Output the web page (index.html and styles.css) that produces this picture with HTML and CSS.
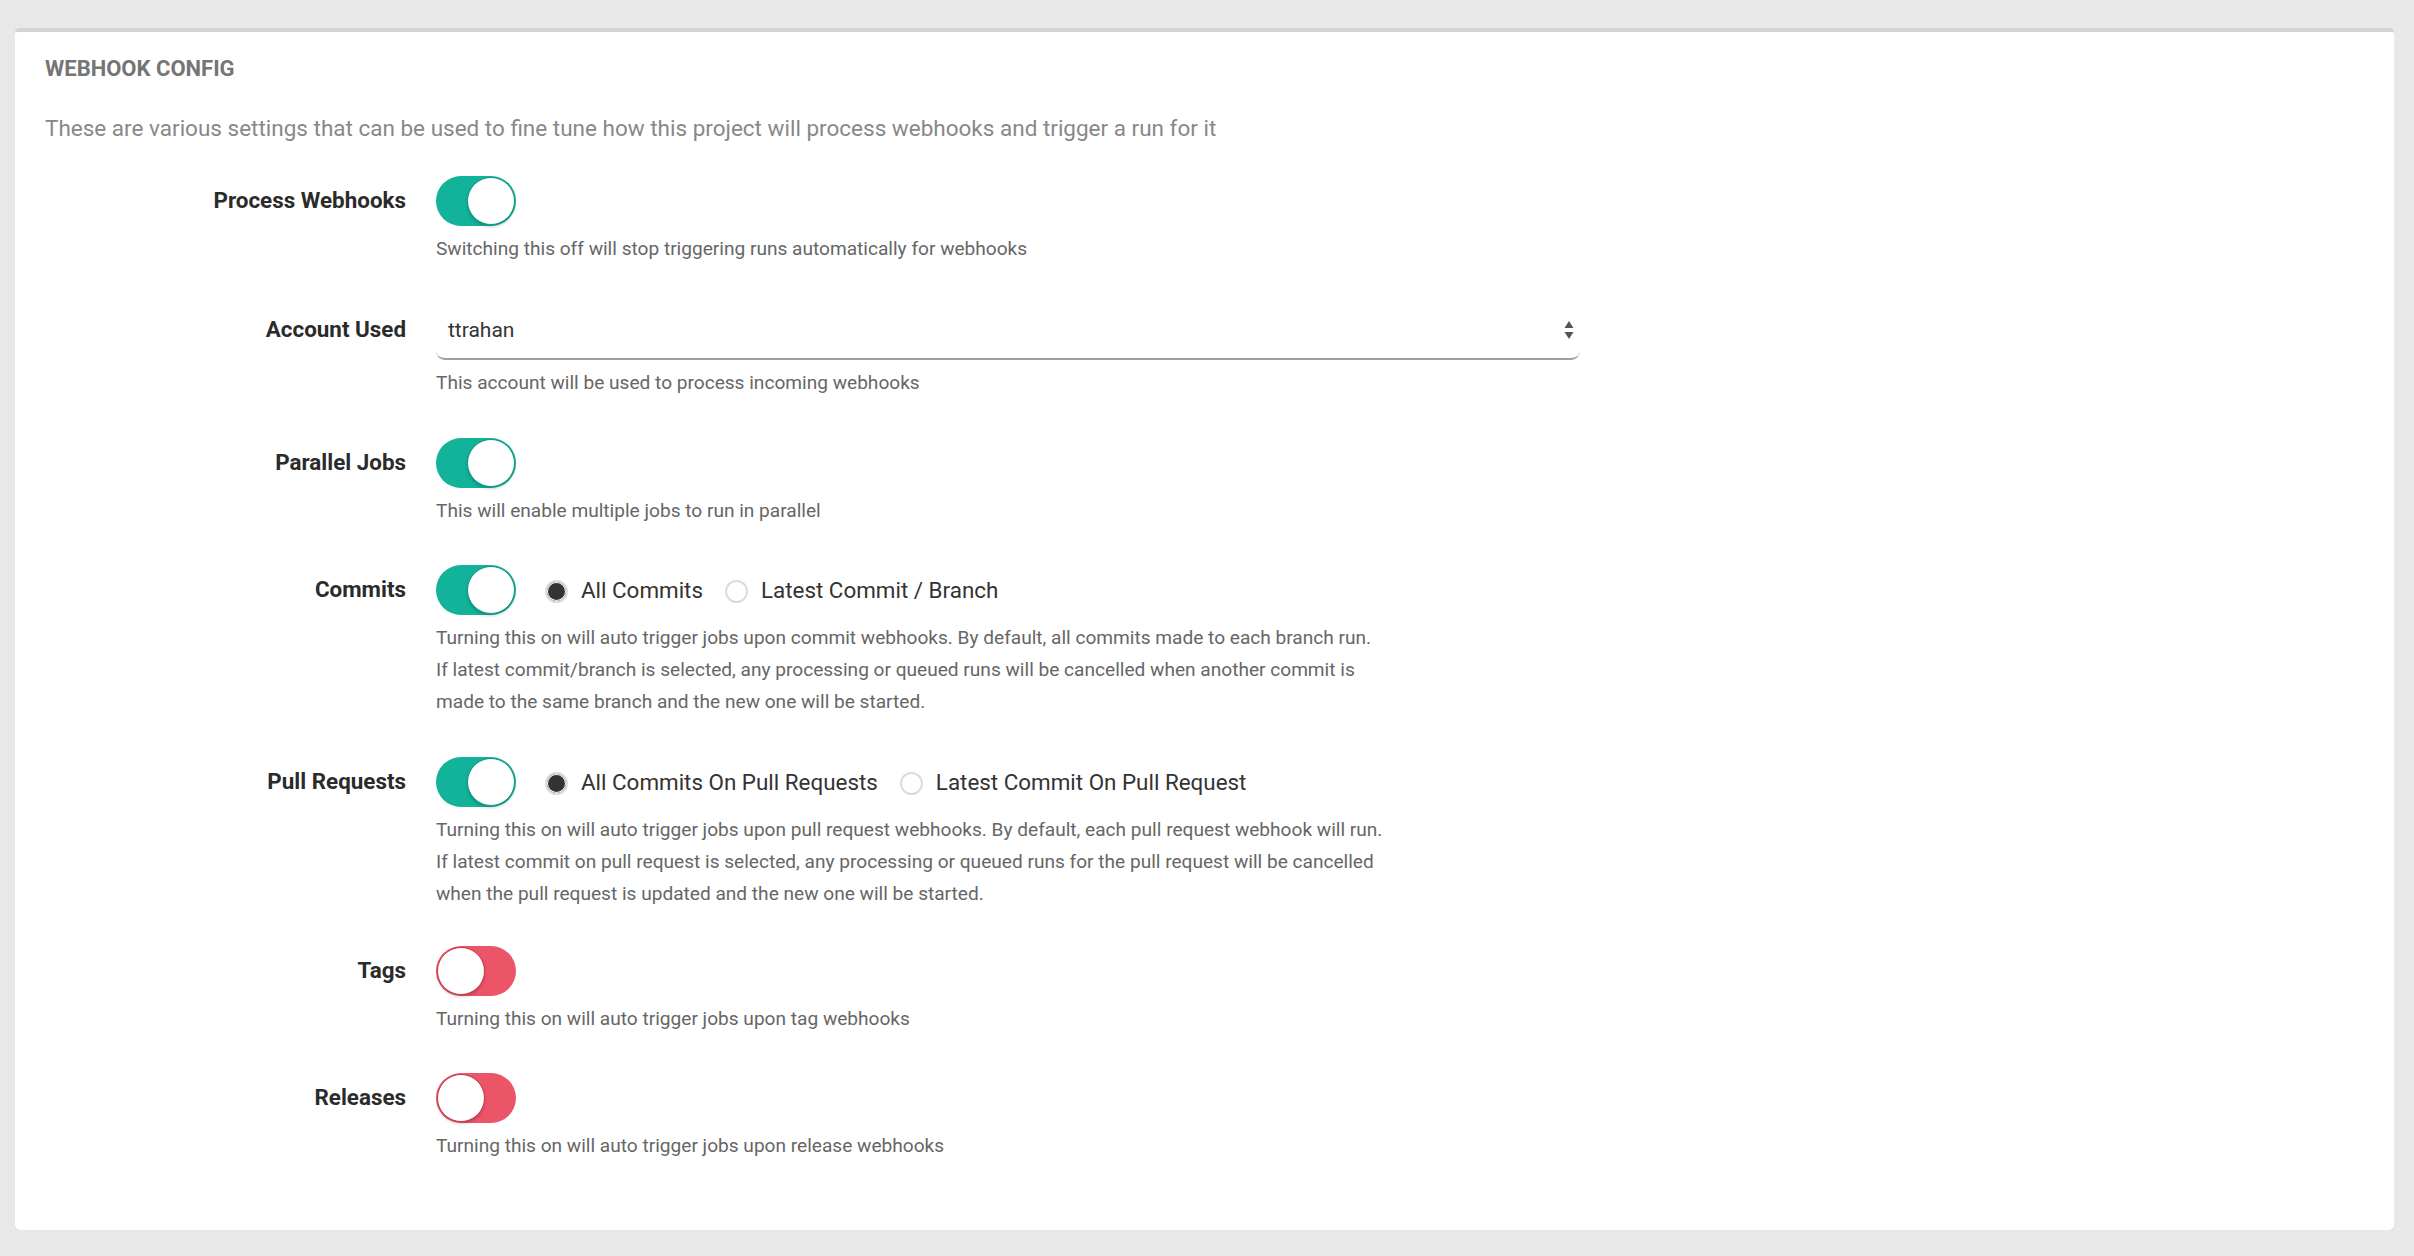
FILE: index.html
```html
<!DOCTYPE html>
<html lang="en">
<head>
<meta charset="utf-8">
<title>Webhook Config</title>
<link rel="stylesheet" href="styles.css">
</head>
<body>
<section class="card">
  <h2 class="card-title">Webhook Config</h2>
  <p class="card-desc">These are various settings that can be used to fine tune how this project will process webhooks and trigger a run for it</p>

  <div class="form-group">
    <div class="label">Process Webhooks</div>
    <div class="field">
      <div class="control-row"><span class="toggle on"><span class="knob"></span></span></div>
      <p class="help">Switching this off will stop triggering runs automatically for webhooks</p>
    </div>
  </div>

  <div class="form-group">
    <div class="label label-select">Account Used</div>
    <div class="field">
      <div class="select">
        <span class="select-value">ttrahan</span>
        <svg class="select-arrows" width="10" height="20" viewBox="0 0 10 20"><path d="M5 1 L9.5 8 L0.5 8 Z M5 19 L9.5 12 L0.5 12 Z" fill="#555"/></svg>
      </div>
      <p class="help">This account will be used to process incoming webhooks</p>
    </div>
  </div>

  <div class="form-group">
    <div class="label">Parallel Jobs</div>
    <div class="field">
      <div class="control-row"><span class="toggle on"><span class="knob"></span></span></div>
      <p class="help">This will enable multiple jobs to run in parallel</p>
    </div>
  </div>

  <div class="form-group">
    <div class="label">Commits</div>
    <div class="field">
      <div class="control-row">
        <span class="toggle on"><span class="knob"></span></span>
        <label class="radio"><span class="radio-dot checked"></span>All Commits</label>
        <label class="radio"><span class="radio-dot"></span>Latest Commit / Branch</label>
      </div>
      <p class="help">Turning this on will auto trigger jobs upon commit webhooks. By default, all commits made to each branch run.<br>If latest commit/branch is selected, any processing or queued runs will be cancelled when another commit is<br>made to the same branch and the new one will be started.</p>
    </div>
  </div>

  <div class="form-group form-group-tight">
    <div class="label">Pull Requests</div>
    <div class="field">
      <div class="control-row">
        <span class="toggle on"><span class="knob"></span></span>
        <label class="radio"><span class="radio-dot checked"></span>All Commits On Pull Requests</label>
        <label class="radio"><span class="radio-dot"></span>Latest Commit On Pull Request</label>
      </div>
      <p class="help">Turning this on will auto trigger jobs upon pull request webhooks. By default, each pull request webhook will run.<br>If latest commit on pull request is selected, any processing or queued runs for the pull request will be cancelled<br>when the pull request is updated and the new one will be started.</p>
    </div>
  </div>

  <div class="form-group">
    <div class="label">Tags</div>
    <div class="field">
      <div class="control-row"><span class="toggle off"><span class="knob"></span></span></div>
      <p class="help">Turning this on will auto trigger jobs upon tag webhooks</p>
    </div>
  </div>

  <div class="form-group">
    <div class="label">Releases</div>
    <div class="field">
      <div class="control-row"><span class="toggle off"><span class="knob"></span></span></div>
      <p class="help">Turning this on will auto trigger jobs upon release webhooks</p>
    </div>
  </div>
</section>
</body>
</html>
```
FILE: styles.css
```css
html, body {
  background: #e8e8e8;
}
body {
  margin: 28px 20px 26px 15px;
  font-family: Roboto, "Liberation Sans", Arial, sans-serif;
  color: #333;
}
.card {
  background: #fff;
  border-top: 4px solid #d3d3d3;
  border-radius: 5px;
  box-shadow: 0 1px 3px rgba(0,0,0,0.08);
  padding: 25px 30px 30px;
  height: 1202px;
  box-sizing: border-box;
}
.card-title {
  margin: 0;
  font-size: 22px;
  line-height: 24px;
  font-weight: 700;
  color: #757575;
  text-transform: uppercase;
}
.card-desc {
  margin: 31px 0 32px;
  font-size: 22.5px;
  line-height: 32px;
  color: #888;
}
.form-group {
  display: flex;
  margin-bottom: 38px;
}
.form-group-tight {
  margin-bottom: 35px;
}
.label {
  width: 361px;
  margin-right: 30px;
  flex: none;
  text-align: right;
  font-weight: 700;
  font-size: 22.4px;
  height: 50px;
  line-height: 49px;
  color: #2b2b2b;
}
.label-select {
  height: 57px;
  line-height: 53px;
}
.field {
  flex: 1;
}
.control-row {
  display: flex;
  align-items: center;
  height: 50px;
}
.help {
  margin: 7px 0 0;
  font-size: 19.1px;
  line-height: 32.3px;
  color: #666;
}
.toggle {
  display: flex;
  box-sizing: border-box;
  width: 80px;
  height: 50px;
  border-radius: 25px;
  padding: 1px;
  flex: none;
}
.toggle.on {
  background: #12b29b;
  justify-content: flex-end;
}
.toggle.off {
  background: #ec5468;
  justify-content: flex-start;
}
.knob {
  width: 48px;
  height: 48px;
  box-sizing: border-box;
  border-radius: 50%;
  background: #fff;
  box-shadow: 0 2px 3px rgba(0,0,0,0.18);
}
.toggle.on .knob {
  border: 1.5px solid #0e9985;
}
.toggle.off .knob {
  border: 1.5px solid #c8394c;
}
.radio {
  display: flex;
  align-items: center;
  font-size: 22.4px;
  color: #333;
  margin-left: 0;
}
.toggle + .radio {
  margin-left: 29px;
}
.radio + .radio {
  margin-left: 22px;
}
.radio-dot {
  width: 23px;
  height: 23px;
  box-sizing: border-box;
  border-radius: 50%;
  border: 2px solid #dcdcdc;
  background: #fff;
  margin-right: 13px;
  margin-top: 3px;
}
.radio-dot.checked {
  background: #333;
  box-shadow: inset 0 0 0 1px #fff;
}
.select {
  display: flex;
  align-items: center;
  justify-content: space-between;
  box-sizing: border-box;
  width: 1144px;
  height: 57px;
  padding: 0 6px 1px 12px;
  border-bottom: 2px solid #9e9e9e;
  border-radius: 0 0 9px 9px;
  font-size: 21px;
  color: #333;
}
.select-arrows {
  display: block;
}
```
